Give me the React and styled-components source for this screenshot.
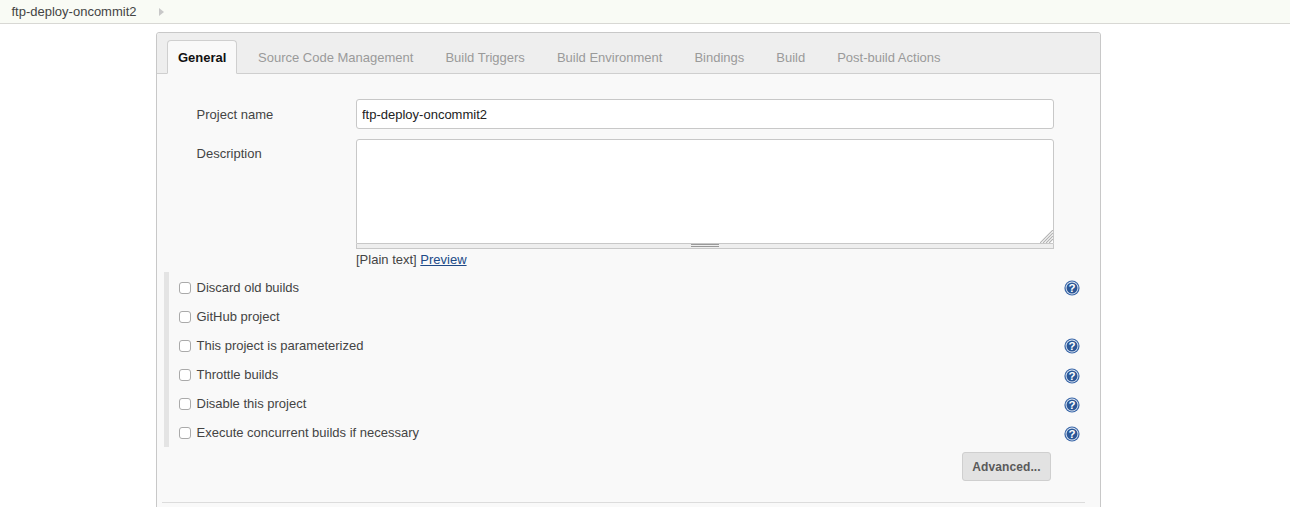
import React from "react";
import styled, { createGlobalStyle } from "styled-components";

const Global = createGlobalStyle`
  html, body { margin: 0; padding: 0; background: #fff; height: 507px; overflow: hidden; }
  body { font-family: "Liberation Sans", Arial, sans-serif; font-size: 13px; color: #444; }
`;

const Breadcrumbs = styled.div`
  height: 23px;
  border-bottom: 1px solid #d8d8d4;
  background: #f9fbf5;
  display: flex;
  align-items: center;
  padding-left: 11.5px;
  font-size: 13px;
  color: #444;
`;
const Crumb = styled.span`
  line-height: 22px;
`;
const CrumbArrow = styled.span`
  width: 0;
  height: 0;
  margin-left: 22px;
  border-left: 5px solid #c8c8c8;
  border-top: 4px solid transparent;
  border-bottom: 4px solid transparent;
`;

const Panel = styled.div`
  box-sizing: border-box;
  width: 945px;
  height: 500px;
  margin: 8px 0 0 156px;
  border: 1px solid #c8c8c8;
  border-radius: 3px 3px 0 0;
  background: #f9f9f9;
`;
const TabBar = styled.div`
  height: 33px;
  padding: 7px 0 0 10px;
  display: flex;
  align-items: flex-end;
  background: #eeeeee;
  border-bottom: 1px solid #cfcfcf;
  border-radius: 3px 3px 0 0;
`;
const Tab = styled.div`
  box-sizing: border-box;
  height: ${(p) => (p.$active ? "34px" : "33px")};
  margin-bottom: ${(p) => (p.$active ? "-1px" : "0")};
  padding: 0 ${(p) => (p.$active ? "10px" : "16px")};
  margin-right: ${(p) => (p.$active ? "4.6px" : "0")};
  line-height: ${(p) => (p.$active ? "33px" : "35px")};
  font-size: 13px;
  font-weight: ${(p) => (p.$active ? 700 : 400)};
  color: ${(p) => (p.$active ? "#111" : "#9a9a9a")};
  background: ${(p) => (p.$active ? "#f9f9f9" : "transparent")};
  border: ${(p) => (p.$active ? "1px solid #cfcfcf" : "0")};
  border-bottom: ${(p) => (p.$active ? "1px solid #f9f9f9" : "0")};
  border-radius: 4px 4px 0 0;
`;

const Form = styled.div`
  padding: 25px 0 0 7px;
`;
const FieldRow = styled.div`
  display: grid;
  grid-template-columns: 192px 698px;
  margin-bottom: ${(p) => p.$gap || 0}px;
`;
const Label = styled.div`
  padding: ${(p) => p.$top}px 0 0 32.6px;
  line-height: 15px;
  color: #444;
`;
const TextInput = styled.input`
  box-sizing: border-box;
  width: 698px;
  height: 30px;
  padding: 0 5px;
  border: 1px solid #c8c8c8;
  border-radius: 3px;
  background: #fff;
  font: 13px "Liberation Sans", Arial, sans-serif;
  color: #222;
  outline: none;
`;
const TextArea = styled.div`
  box-sizing: border-box;
  height: 105px;
  border: 1px solid #c8c8c8;
  border-radius: 3px 3px 0 0;
  background: #fff;
  position: relative;
`;
const ResizeCorner = styled.svg`
  position: absolute;
  right: 0;
  bottom: 0;
`;
const Grippie = styled.div`
  box-sizing: border-box;
  height: 5px;
  background: #eee;
  border: 1px solid #c8c8c8;
  border-top: 0;
  display: flex;
  justify-content: center;
`;
const GrippieMark = styled.span`
  width: 28px;
  height: 3px;
  border-top: 1px solid #999;
  border-bottom: 1px solid #999;
  box-sizing: border-box;
`;
const Hint = styled.div`
  padding-top: 3px;
  line-height: 15px;
  color: #444;
`;
const Link = styled.a`
  color: #204a87;
  text-decoration: underline;
`;

const OptionBlock = styled.div`
  margin-top: 5px;
  border-left: 5px solid #e4e4e4;
  width: 915px;
  height: 174px;
  padding-top: 1px;
`;
const Option = styled.div`
  display: flex;
  align-items: center;
  height: 29px;
  padding-left: 10px;
`;
const Box = styled.span`
  box-sizing: border-box;
  width: 12px;
  height: 12px;
  border: 1px solid #aaa;
  border-radius: 3px;
  background: #fff;
  margin: 0 6px 0 0;
  flex: none;
`;
const OptionLabel = styled.span`
  flex: 1;
  margin-left: -0.5px;
  color: #444;
`;
const HelpIcon = styled.svg`
  flex: none;
  margin-top: ${(p) => p.$shift}px;
  margin-right: 4px;
`;
const Actions = styled.div`
  display: flex;
  justify-content: flex-end;
  width: 887px;
  margin-top: 5px;
`;
const Button = styled.button`
  box-sizing: border-box;
  width: 89px;
  height: 29px;
  padding: 0;
  border: 1px solid #cfcfcf;
  border-radius: 3px;
  background: #e2e2e2;
  color: #5a5a5a;
  font: 700 12px "Liberation Sans", Arial, sans-serif;
  letter-spacing: 0.1px;
`;
const Divider = styled.div`
  height: 1px;
  margin: 21px 15px 0 -2px;
  background: #dcdcdc;
`;

const Help = ({ shift }) => (
  <HelpIcon $shift={shift} width="16" height="16" viewBox="0 0 16 16">
    <circle cx="8" cy="8" r="7.6" fill="#3a67a8" />
    <circle cx="8" cy="8" r="6.4" fill="#e4ebf5" />
    <circle cx="8" cy="8" r="5.5" fill="#2b5797" />
    <text
      x="8"
      y="12"
      textAnchor="middle"
      fontFamily="Liberation Sans, Arial, sans-serif"
      fontWeight="700"
      fontSize="11.5"
      fill="#fff"
    >
      ?
    </text>
  </HelpIcon>
);

const tabs = [
  "Source Code Management",
  "Build Triggers",
  "Build Environment",
  "Bindings",
  "Build",
  "Post-build Actions",
];
const options = [
  ["Discard old builds", 1],
  ["GitHub project", null],
  ["This project is parameterized", 1],
  ["Throttle builds", 3],
  ["Disable this project", 3],
  ["Execute concurrent builds if necessary", 3],
];

export default function App() {
  return (
    <>
      <Global />
      <Breadcrumbs>
        <Crumb>ftp-deploy-oncommit2</Crumb>
        <CrumbArrow />
      </Breadcrumbs>
      <Panel>
        <TabBar>
          <Tab $active>General</Tab>
          {tabs.map((t) => (
            <Tab key={t}>{t}</Tab>
          ))}
        </TabBar>
        <Form>
          <FieldRow $gap={10}>
            <Label $top={8}>Project name</Label>
            <TextInput defaultValue="ftp-deploy-oncommit2" />
          </FieldRow>
          <FieldRow>
            <Label $top={7}>Description</Label>
            <div>
              <TextArea>
                <ResizeCorner width="13" height="13" viewBox="0 0 13 13">
                  <path d="M0 13 13 0M3 13 13 3M6 13l7-7M9 13l4-4" stroke="#b4b4b4" strokeWidth="1.2" fill="none" />
                </ResizeCorner>
              </TextArea>
              <Grippie>
                <GrippieMark />
              </Grippie>
              <Hint>
                [Plain text] <Link href="#">Preview</Link>
              </Hint>
            </div>
          </FieldRow>
          <OptionBlock>
            {options.map(([label, shift]) => (
              <Option key={label}>
                <Box />
                <OptionLabel>{label}</OptionLabel>
                {shift !== null && <Help shift={shift} />}
              </Option>
            ))}
          </OptionBlock>
          <Actions>
            <Button>Advanced...</Button>
          </Actions>
          <Divider />
        </Form>
      </Panel>
    </>
  );
}
